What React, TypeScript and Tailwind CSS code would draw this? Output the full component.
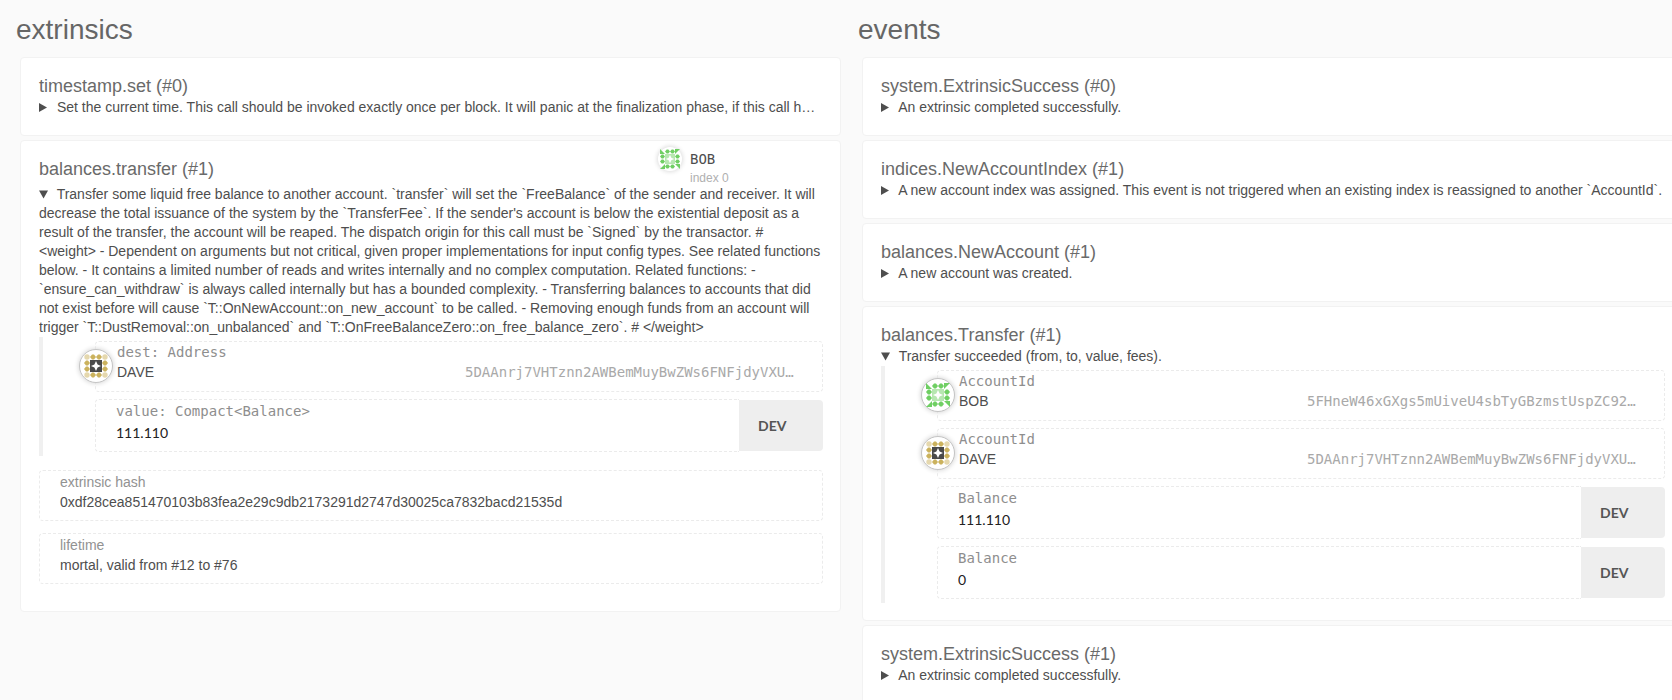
import type { ReactNode } from 'react';

type Owner = 'bob' | 'dave';

const EDGE_CELLS = [
  [9, 3], [15, 3], [9, 21], [15, 21], [3, 9], [3, 15], [21, 9], [21, 15],
];
const CORNER_CELLS = [[3, 3], [21, 3], [3, 21], [21, 21]];

function Identicon({ owner, className }: { owner: Owner; className: string }) {
  const bob = owner === 'bob';
  const main = bob ? '#6fcf63' : '#cbb25d';
  return (
    <svg viewBox="0 0 24 24" className={className} role="img" aria-label={owner}>
      {EDGE_CELLS.map(([x, y]) => (
        <path key={`${x}-${y}`} fill={main} d={`M${x - 3} ${y}l2-2.5h2l2 2.5l-2 2.5h-2z`} />
      ))}
      {bob
        ? [0, 90, 180, 270].map((turn) => (
            <path key={turn} fill={main} d="M0 0V6H6z" transform={`rotate(${turn} 12 12)`} />
          ))
        : CORNER_CELLS.map(([x, y]) => (
            <circle key={`${x}-${y}`} cx={x} cy={y} r="2.7" fill="#e5d8ae" />
          ))}
      <path d="M6 6h12v12H6z" fill={bob ? '#b7e7b1' : '#4a4a4a'} />
      <path d="M12 7l1.6 3.4L17 12l-3.4 1.6L12 17l-1.6-3.4L7 12l3.4-1.6z" fill="#fff" />
    </svg>
  );
}

function Card({ children }: { children: ReactNode }) {
  return (
    <article className="rounded border border-[#f2f2f2] bg-white p-[17px] pl-[18px]">{children}</article>
  );
}

function Title({ children }: { children: ReactNode }) {
  return (
    <h3 className="text-[18px] leading-[23px] whitespace-nowrap text-[#6a6a6a]">{children}</h3>
  );
}

function Details({ text, open, children }: { text: string; open?: boolean; children?: ReactNode }) {
  return (
    <details open={open} className="group min-h-5">
      <summary className="block cursor-pointer truncate text-[14px] leading-[19px] text-[#4e4e4e] group-open:whitespace-normal">
        <svg viewBox="0 0 9 9" className="mr-[5px] inline-block h-[9px] w-[9px] align-baseline" aria-hidden="true">
          <path d="M0 0L8 4.5L0 9z" fill="#4e4e4e" className="group-open:hidden" />
          <path d="M0 0.5H9L4.5 8.5z" fill="#4e4e4e" className="hidden group-open:block" />
        </svg>{' '}
        {text}
      </summary>
      {children}
    </details>
  );
}

function Params({ children }: { children: ReactNode }) {
  return (
    <div className="flex flex-col gap-[7px] border-l-4 border-[#f0f0f0] py-1 pl-[52px]">
      {children}
    </div>
  );
}

const LABEL = "font-['DejaVu_Sans_Mono',monospace] text-[14px] leading-[19px] text-[#8e8e8e]";

function AccountParam({ label, name, address, owner }: { label: string; name: string; address: string; owner: Owner }) {
  return (
    <div className="flex h-[51px] rounded border border-dashed border-[#ebebeb] pr-[27px]">
      <div className="mt-[7px] -ml-[17px] flex h-[34px] w-[34px] shrink-0 items-center justify-center rounded-full border border-[#c4c4c4] bg-white shadow-[0_0_4px_1px_#dddddd]">
        <Identicon owner={owner} className="h-6 w-6" />
      </div>
      <div className="ml-1 min-w-0 grow pt-px">
        <div className={LABEL}>{label}</div>
        <div className="flex justify-between">
          <div className="text-[14px] leading-[21px] text-[#4e4e4e]">{name}</div>
          <div className="h-[18px] w-[330px] truncate font-['DejaVu_Sans_Mono',monospace] text-[14px] leading-[21px] text-[#a9a9a9]">
            {address}
          </div>
        </div>
      </div>
    </div>
  );
}

function BalanceParam({ id, label, value }: { id: string; label: string; value: string }) {
  return (
    <div className="flex h-[53px]">
      <div className="flex min-w-0 grow flex-col rounded-l border border-r-0 border-dashed border-[#ebebeb] pt-[2px] pl-5">
        <label htmlFor={id} className={LABEL}>{label}</label>
        <input
          id={id}
          readOnly
          defaultValue={value}
          className="h-6 w-full bg-transparent p-0 font-['Lato',sans-serif] text-[14px] leading-6 text-[#222222] outline-none"
        />
      </div>
      <select
        aria-label={`${label} unit`}
        className="my-px w-[84px] appearance-none rounded-r bg-[#eeeeee] pl-[19px] font-['Lato',sans-serif] text-[14px] font-bold text-[#555555] outline-none"
      >
        <option>DEV</option>
      </select>
    </div>
  );
}

function Output({ label, value }: { label: string; value: string }) {
  return (
    <div className="h-[51px] rounded border border-dashed border-[#ebebeb] pt-[2px] pl-5 text-[14px]">
      <div className="leading-[19px] text-[#929292]">{label}</div>
      <div className="leading-[21px] text-[#4e4e4e]">{value}</div>
    </div>
  );
}

const DAVE = '5DAAnrj7VHTznn2AWBemMuyBwZWs6FNFjdyVXUPMg62eMcJuNYwDT';
const BOB = '5FHneW46xGXgs5mUiveU4sbTyGBzmstUspZC92UhjJM694ty';

const TRANSFER_DOC =
  "Transfer some liquid free balance to another account. `transfer` will set the `FreeBalance` of the sender and receiver. It will decrease the total issuance of the system by the `TransferFee`. If the sender's account is below the existential deposit as a result of the transfer, the account will be reaped. The dispatch origin for this call must be `Signed` by the transactor. # <weight> - Dependent on arguments but not critical, given proper implementations for input config types. See related functions below. - It contains a limited number of reads and writes internally and no complex computation. Related functions: - `ensure_can_withdraw` is always called internally but has a bounded complexity. - Transferring balances to accounts that did not exist before will cause `T::OnNewAccount::on_new_account` to be called. - Removing enough funds from an account will trigger `T::DustRemoval::on_unbalanced` and `T::OnFreeBalanceZero::on_free_balance_zero`. # </weight>";

function Column({ title, children }: { title: string; children: ReactNode }) {
  return (
    <section className="min-w-0">
      <h1 className="-ml-1 pt-[14px] pb-[11px] text-[28px] leading-8 text-[#666666]">{title}</h1>
      <div className="flex flex-col gap-1">{children}</div>
    </section>
  );
}

export default function App() {
  return (
    <div className="min-h-screen overflow-hidden bg-[#fafafa] font-['Liberation_Sans',Arial,sans-serif] lg:h-screen">
      <main className="-mr-[11px] grid grid-cols-1 gap-x-[21px] pl-5 lg:grid-cols-2">
        <Column title="extrinsics">
          <Card>
            <Title>timestamp.set (#0)</Title>
            <Details text="Set the current time. This call should be invoked exactly once per block. It will panic at the finalization phase, if this call hasn't been invoked by that time." />
          </Card>
          <Card>
            <div className="flex h-[27px] items-start justify-between">
              <Title>balances.transfer (#1)</Title>
              <div className="-mt-[11px] flex w-[165px] gap-2">
                <div className="flex h-6 w-6 items-center justify-center rounded-full bg-white shadow-[0_0_4px_1px_#dddddd]">
                  <Identicon owner="bob" className="h-5 w-5" />
                </div>
                <div>
                  <div className="font-['DejaVu_Sans_Mono',monospace] text-[14px] leading-6 text-[#4e4e4e]">BOB</div>
                  <div className="text-[12px] leading-[14px] text-[#b0b0b0]">index 0</div>
                </div>
              </div>
            </div>
            <Details open text={TRANSFER_DOC}>
              <Params>
                <AccountParam owner="dave" label="dest: Address" name="DAVE" address={DAVE} />
                <BalanceParam id="transfer-value" label="value: Compact<Balance>" value="111.110" />
              </Params>
            </Details>
            <div className="mt-[14px] mb-[10px] flex flex-col gap-3">
              <Output label="extrinsic hash" value="0xdf28cea851470103b83fea2e29c9db2173291d2747d30025ca7832bacd21535d" />
              <Output label="lifetime" value="mortal, valid from #12 to #76" />
            </div>
          </Card>
        </Column>
        <Column title="events">
          <Card>
            <Title>system.ExtrinsicSuccess (#0)</Title>
            <Details text="An extrinsic completed successfully." />
          </Card>
          <Card>
            <Title>indices.NewAccountIndex (#1)</Title>
            <Details text="A new account index was assigned. This event is not triggered when an existing index is reassigned to another `AccountId`." />
          </Card>
          <Card>
            <Title>balances.NewAccount (#1)</Title>
            <Details text="A new account was created." />
          </Card>
          <Card>
            <Title>balances.Transfer (#1)</Title>
            <Details open text="Transfer succeeded (from, to, value, fees).">
              <Params>
                <AccountParam owner="bob" label="AccountId" name="BOB" address={BOB} />
                <AccountParam owner="dave" label="AccountId" name="DAVE" address={DAVE} />
                <BalanceParam id="event-value" label="Balance" value="111.110" />
                <BalanceParam id="event-fees" label="Balance" value="0" />
              </Params>
            </Details>
          </Card>
          <Card>
            <Title>system.ExtrinsicSuccess (#1)</Title>
            <Details text="An extrinsic completed successfully." />
          </Card>
        </Column>
      </main>
    </div>
  );
}
